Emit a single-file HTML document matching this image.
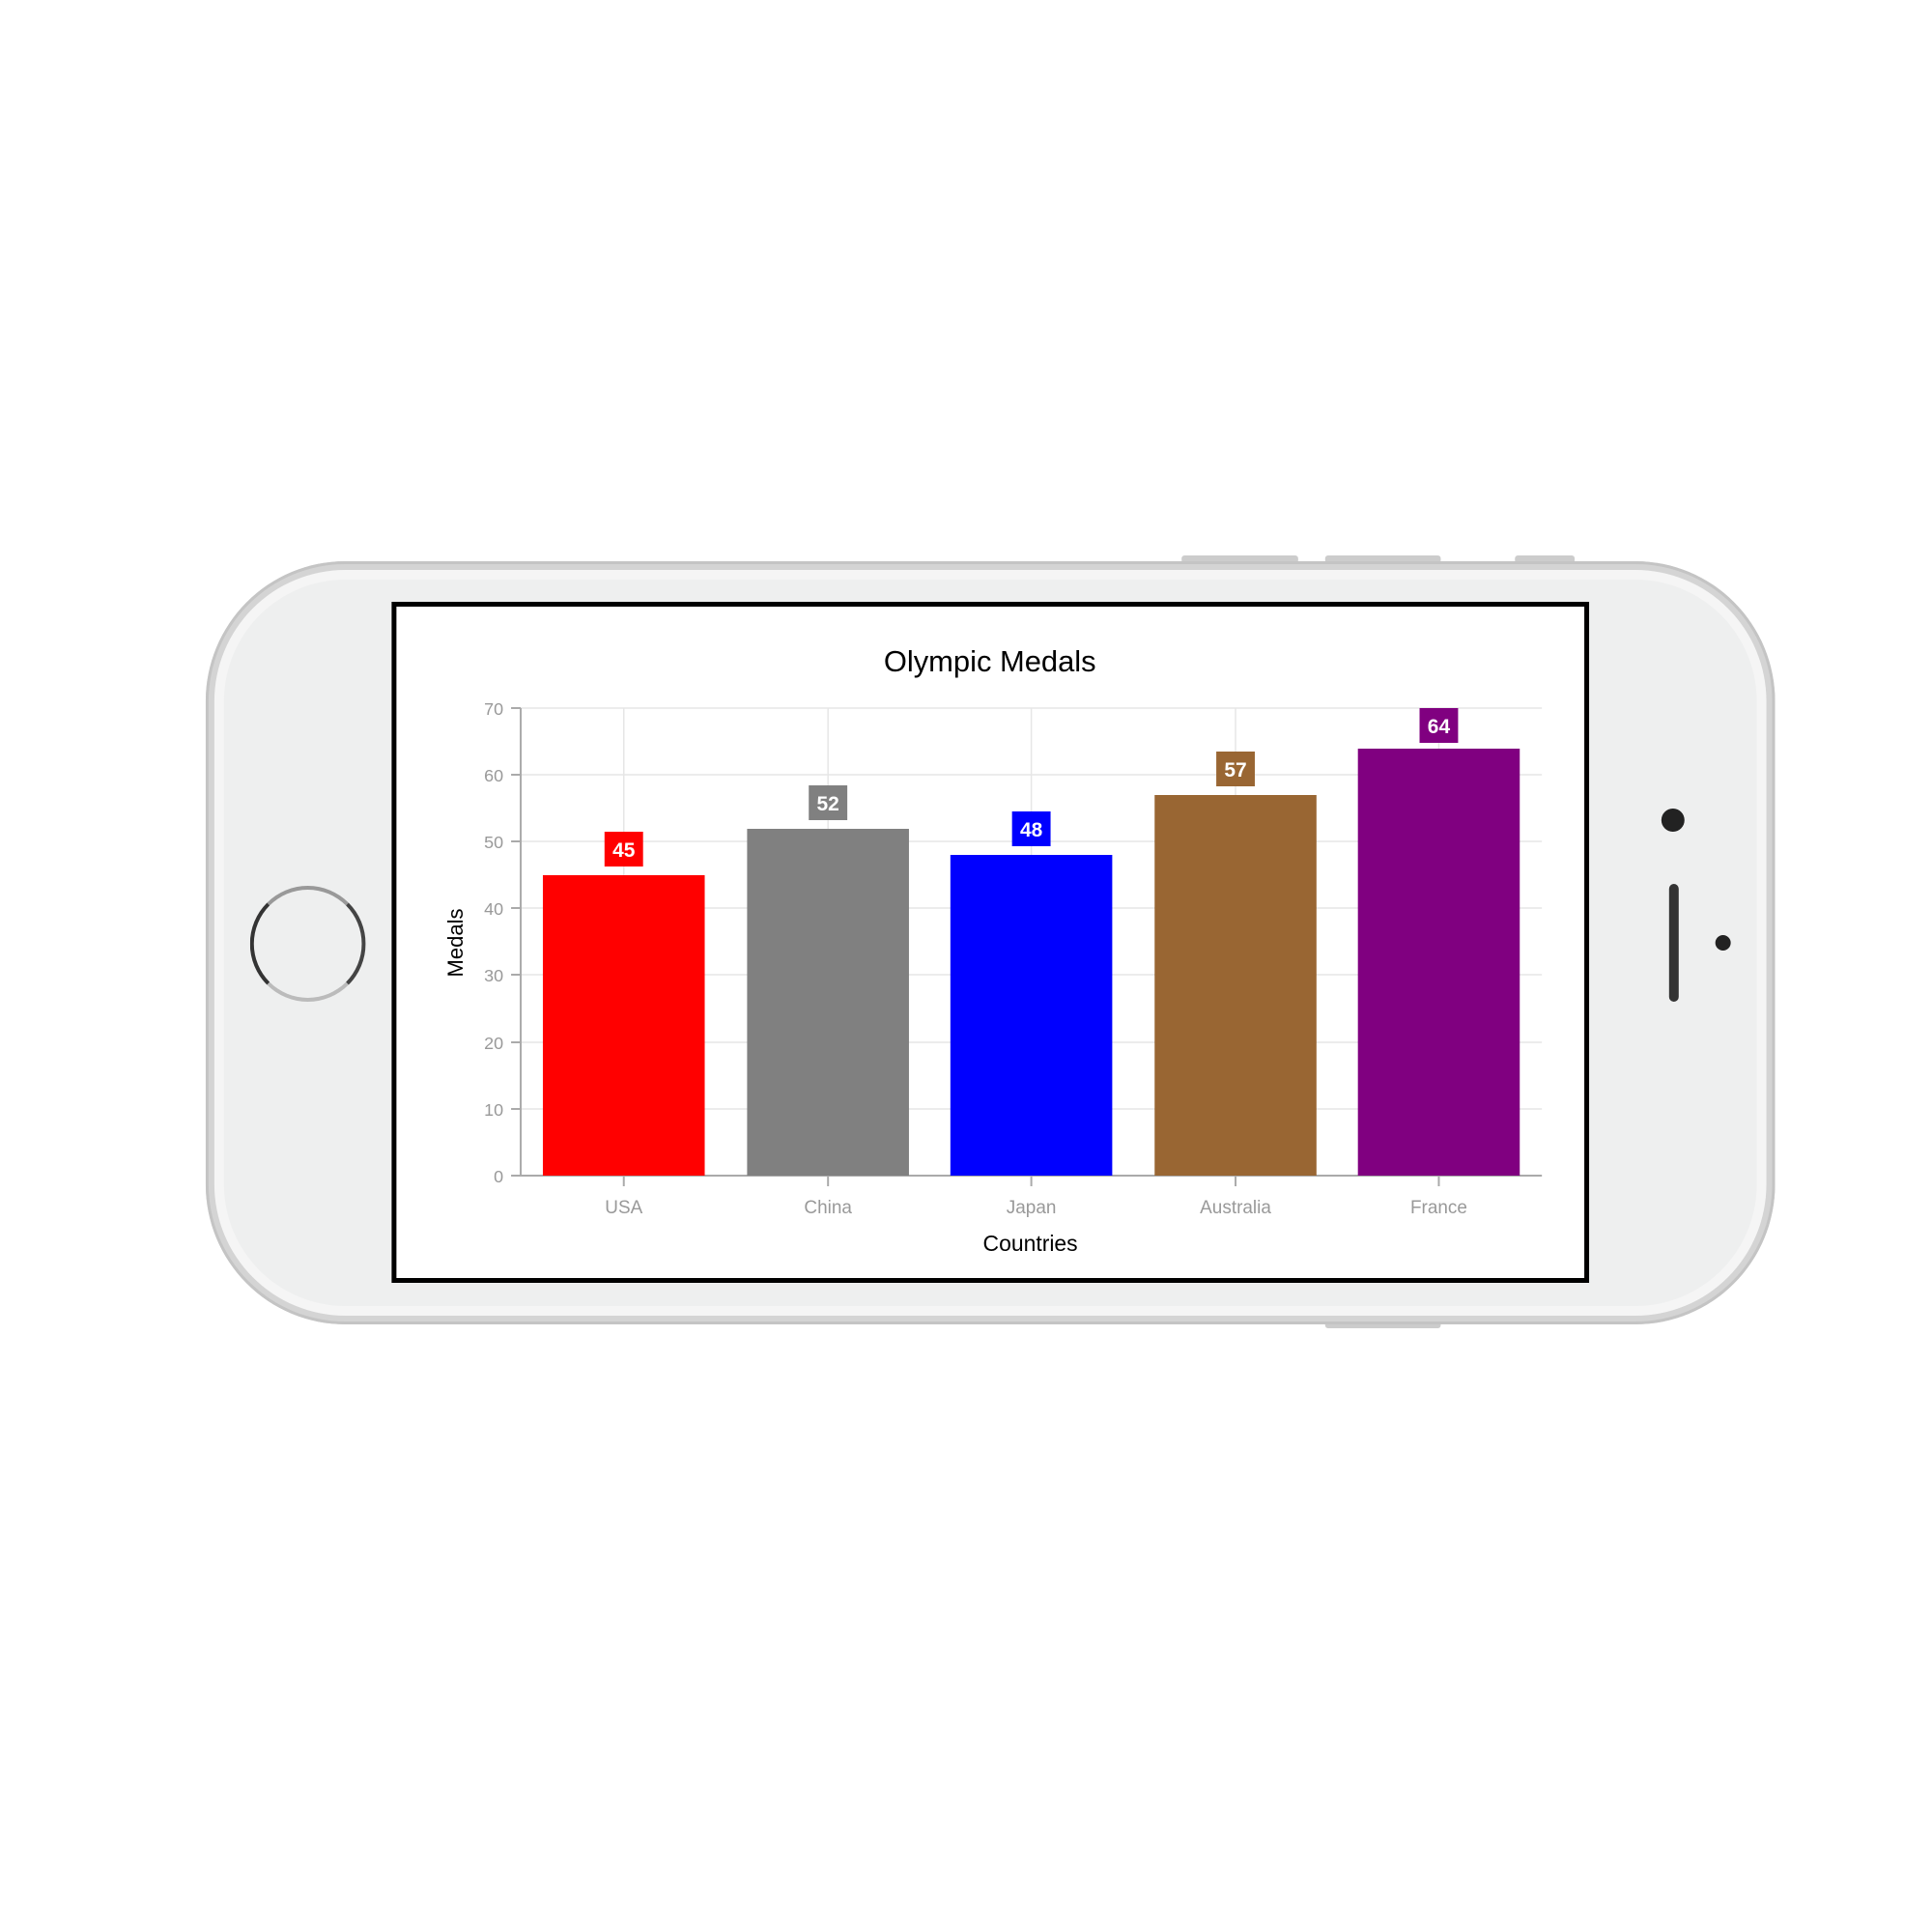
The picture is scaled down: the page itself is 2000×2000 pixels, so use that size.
<!DOCTYPE html>
<html><head><style>
body{margin:0;width:2000px;height:2000px;background:#fff;position:relative;overflow:hidden;font-family:"Liberation Sans",sans-serif}
.a{position:absolute}
#w{position:absolute;left:0;top:0;width:2000px;height:2000px;transform-origin:0 0;transform:translate(-1.5px,-5px) scaleX(0.9973)}
</style></head><body><div id="w">
<div class="a" style="left:1228px;top:580px;width:121px;height:8px;background:#ccc;border-radius:3px"></div>
<div class="a" style="left:1377px;top:580px;width:120px;height:8px;background:#ccc;border-radius:3px"></div>
<div class="a" style="left:1574px;top:580px;width:62px;height:8px;background:#ccc;border-radius:3px"></div>
<div class="a" style="left:1377px;top:1372px;width:120px;height:8px;background:#ccc;border-radius:3px"></div>
<div class="a" style="left:215px;top:586px;width:1629px;height:790px;border-radius:145px;background:#d4d4d4;box-shadow:inset 0 0 0 3px #c4c4c4"></div>
<div class="a" style="left:224px;top:595px;width:1611px;height:772px;border-radius:136px;background:#f5f5f5"></div>
<div class="a" style="left:234px;top:605px;width:1591px;height:752px;border-radius:126px;background:#eeefef"></div>
<div class="a" style="left:261px;top:922px;width:112px;height:112px;border-radius:50%;border:4px solid #555;border-color:#999 #444 #bbb #333"></div>
<div class="a" style="left:1726px;top:842px;width:24px;height:24px;border-radius:50%;background:#222"></div>
<div class="a" style="left:1734px;top:920px;width:10px;height:122px;border-radius:5px;background:#333"></div>
<div class="a" style="left:1782px;top:973px;width:16px;height:16px;border-radius:50%;background:#222"></div>
<div class="a" style="left:408px;top:628px;width:1233px;height:695px;border:5px solid #000;background:#fff"></div>
<svg class="a" style="left:0;top:0" width="2000" height="2000" font-family="Liberation Sans, sans-serif">
<text x="1029" y="700" font-size="31" text-anchor="middle" fill="#000">Olympic Medals</text>
<g stroke="#e6e6e6" stroke-width="1.5">
<line x1="542" x2="1602" y1="738" y2="738"/><line x1="542" x2="1602" y1="807" y2="807"/><line x1="542" x2="1602" y1="876" y2="876"/><line x1="542" x2="1602" y1="945" y2="945"/><line x1="542" x2="1602" y1="1014" y2="1014"/><line x1="542" x2="1602" y1="1084" y2="1084"/><line x1="542" x2="1602" y1="1153" y2="1153"/>
<line x1="649" x2="649" y1="738" y2="1222"/><line x1="861" x2="861" y1="738" y2="1222"/><line x1="1072" x2="1072" y1="738" y2="1222"/><line x1="1284" x2="1284" y1="738" y2="1222"/><line x1="1495" x2="1495" y1="738" y2="1222"/>
</g>
<g stroke="#aaa" stroke-width="2">
<line x1="542" x2="542" y1="738" y2="1222"/><line x1="542" x2="1602" y1="1222" y2="1222"/>
<line x1="532" x2="542" y1="738" y2="738"/><line x1="532" x2="542" y1="807" y2="807"/><line x1="532" x2="542" y1="876" y2="876"/><line x1="532" x2="542" y1="945" y2="945"/><line x1="532" x2="542" y1="1014" y2="1014"/><line x1="532" x2="542" y1="1084" y2="1084"/><line x1="532" x2="542" y1="1153" y2="1153"/><line x1="532" x2="542" y1="1222" y2="1222"/>
<line x1="649" x2="649" y1="1222" y2="1233"/><line x1="861" x2="861" y1="1222" y2="1233"/><line x1="1072" x2="1072" y1="1222" y2="1233"/><line x1="1284" x2="1284" y1="1222" y2="1233"/><line x1="1495" x2="1495" y1="1222" y2="1233"/>
</g>
<g font-size="18" fill="#999" text-anchor="end">
<text x="524" y="745">70</text><text x="524" y="814">60</text><text x="524" y="883">50</text><text x="524" y="952">40</text><text x="524" y="1021">30</text><text x="524" y="1091">20</text><text x="524" y="1160">10</text><text x="524" y="1229">0</text>
</g>
<rect x="565" y="911" width="168" height="311" fill="#ff0000"/>
<rect x="777" y="863" width="168" height="359" fill="#808080"/>
<rect x="988" y="890" width="168" height="332" fill="#0000ff"/>
<rect x="1200" y="828" width="168" height="394" fill="#996633"/>
<rect x="1411" y="780" width="168" height="442" fill="#800080"/>
<rect x="629" y="866" width="40" height="36" fill="#ff0000"/>
<rect x="841" y="818" width="40" height="36" fill="#808080"/>
<rect x="1052" y="845" width="40" height="36" fill="#0000ff"/>
<rect x="1264" y="783" width="40" height="36" fill="#996633"/>
<rect x="1475" y="738" width="40" height="36" fill="#800080"/>
<g font-size="21" font-weight="bold" fill="#fff" text-anchor="middle">
<text x="649" y="892">45</text><text x="861" y="844">52</text><text x="1072" y="871">48</text><text x="1284" y="809">57</text><text x="1495" y="764">64</text>
</g>
<g font-size="19" fill="#999" text-anchor="middle">
<text x="649" y="1261">USA</text><text x="861" y="1261">China</text><text x="1072" y="1261">Japan</text><text x="1284" y="1261">Australia</text><text x="1495" y="1261">France</text>
</g>
<text x="1071" y="1300" font-size="23" text-anchor="middle" fill="#000">Countries</text>
<text transform="translate(482,981) rotate(-90)" font-size="22" text-anchor="middle" fill="#000">Medals</text>
</svg>
</div></body></html>
